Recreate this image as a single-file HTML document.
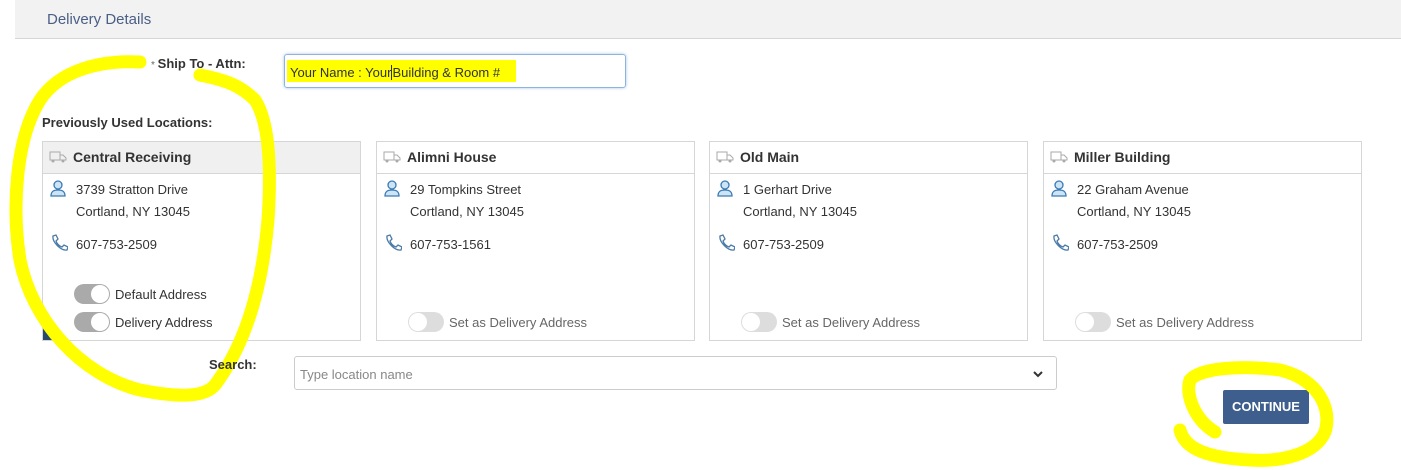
<!DOCTYPE html>
<html><head><style>
body{margin:0;width:1401px;height:470px;background:#fff;font-family:"Liberation Sans",sans-serif;position:relative;overflow:hidden;color:#333}
.abs{position:absolute}
.hdr{left:15px;top:0;width:1386px;height:38px;background:#f2f2f2;border-bottom:1px solid #d6d6d6}
.hdr span{position:absolute;left:32px;top:11px;font-size:15px;color:#4a5f85}
.card{position:absolute;top:141px;width:317px;height:198px;border:1px solid #d6d6d6;background:#fff}
.card .h{height:31px;border-bottom:1px solid #d6d6d6;font-weight:bold;font-size:14px;line-height:31px;padding-left:30px;position:relative}
.card .h svg{position:absolute;left:6px;top:8px}
.l{position:absolute;font-size:13px;color:#333}
.tog{position:absolute;width:36px;height:20px;border-radius:10px}
.tog i{position:absolute;top:1px;width:18px;height:18px;border-radius:9px;background:#fff}
.lab{position:absolute;font-size:13px}
</style></head><body>
<div class="abs hdr"><span>Delivery Details</span></div>
<div class="abs" style="left:151px;top:56px;font-size:13px;font-weight:bold"><span style="font-weight:normal;font-size:10px;color:#666">* </span>Ship To - Attn:</div>
<div class="abs" style="left:284px;top:54px;width:340px;height:32px;border:1px solid #8fb3dd;border-radius:3px;box-shadow:0 0 3px #aac6ea"></div>
<div class="abs" style="left:287px;top:60px;width:229px;height:22px;background:#ffff00"></div>
<div class="abs" style="left:290px;top:65px;font-size:13px;color:#333">Your Name : Your<span style="border-left:1px solid #333"></span>Building &amp; Room #</div>
<div class="abs" style="left:42px;top:115px;font-size:13px;font-weight:bold">Previously Used Locations:</div>

<div class="card" style="left:42px">
 <div class="h" style="background:#f0f0f0"><svg width="18" height="14"><rect x="1" y="2" width="10" height="8" fill="none" stroke="#aaa"/><path d="M11 5h3l3 3v2h-6z" fill="none" stroke="#aaa"/><circle cx="4" cy="11" r="1.5" fill="#aaa"/><circle cx="14" cy="11" r="1.5" fill="#aaa"/></svg>Central Receiving</div>
 <svg class="abs" style="left:6px;top:37px" width="18" height="18"><circle cx="9" cy="6" r="4" fill="#cde4f5" stroke="#3a7ab5" stroke-width="1.3"/><path d="M2 17c0-5 3-6 7-6s7 1 7 6z" fill="#cde4f5" stroke="#3a7ab5" stroke-width="1.3"/></svg>
 <div class="l" style="left:33px;top:40px">3739 Stratton Drive</div>
 <div class="l" style="left:33px;top:62px">Cortland, NY 13045</div>
 <svg class="abs" style="left:7px;top:92px" width="18" height="18"><path d="M3 2l3 -1 2 4-2 2c1 3 3 5 6 6l2-2 4 2-1 3c-6 1-15-8-14-14z" fill="none" stroke="#4a7aa8" stroke-width="1.3"/></svg>
 <div class="l" style="left:33px;top:95px">607-753-2509</div>
 <div class="tog" style="left:31px;top:142px;background:#aaa"><i style="left:17px"></i></div>
 <div class="lab" style="left:72px;top:145px">Default Address</div>
 <div class="tog" style="left:31px;top:170px;background:#aaa"><i style="left:17px"></i></div>
 <div class="lab" style="left:72px;top:173px">Delivery Address</div>
 <svg class="abs" style="left:0;top:172px" width="28" height="26"><path d="M0 0L26 26H0z" fill="#2a4a6a"/><path d="M3 17l3 3 6-7" stroke="#ff0" stroke-width="2" fill="none"/></svg>
</div>

<div class="card" style="left:376px">
 <div class="h"><svg width="18" height="14"><rect x="1" y="2" width="10" height="8" fill="none" stroke="#aaa"/><path d="M11 5h3l3 3v2h-6z" fill="none" stroke="#aaa"/><circle cx="4" cy="11" r="1.5" fill="#aaa"/><circle cx="14" cy="11" r="1.5" fill="#aaa"/></svg>Alimni House</div>
 <svg class="abs" style="left:6px;top:37px" width="18" height="18"><circle cx="9" cy="6" r="4" fill="#cde4f5" stroke="#3a7ab5" stroke-width="1.3"/><path d="M2 17c0-5 3-6 7-6s7 1 7 6z" fill="#cde4f5" stroke="#3a7ab5" stroke-width="1.3"/></svg>
 <div class="l" style="left:33px;top:40px">29 Tompkins Street</div>
 <div class="l" style="left:33px;top:62px">Cortland, NY 13045</div>
 <svg class="abs" style="left:7px;top:92px" width="18" height="18"><path d="M3 2l3 -1 2 4-2 2c1 3 3 5 6 6l2-2 4 2-1 3c-6 1-15-8-14-14z" fill="none" stroke="#4a7aa8" stroke-width="1.3"/></svg>
 <div class="l" style="left:33px;top:95px">607-753-1561</div>
 <div class="tog" style="left:31px;top:170px;background:#ddd"><i style="left:1px"></i></div>
 <div class="lab" style="left:72px;top:173px;color:#666">Set as Delivery Address</div>
</div>

<div class="card" style="left:709px">
 <div class="h"><svg width="18" height="14"><rect x="1" y="2" width="10" height="8" fill="none" stroke="#aaa"/><path d="M11 5h3l3 3v2h-6z" fill="none" stroke="#aaa"/><circle cx="4" cy="11" r="1.5" fill="#aaa"/><circle cx="14" cy="11" r="1.5" fill="#aaa"/></svg>Old Main</div>
 <svg class="abs" style="left:6px;top:37px" width="18" height="18"><circle cx="9" cy="6" r="4" fill="#cde4f5" stroke="#3a7ab5" stroke-width="1.3"/><path d="M2 17c0-5 3-6 7-6s7 1 7 6z" fill="#cde4f5" stroke="#3a7ab5" stroke-width="1.3"/></svg>
 <div class="l" style="left:33px;top:40px">1 Gerhart Drive</div>
 <div class="l" style="left:33px;top:62px">Cortland, NY 13045</div>
 <svg class="abs" style="left:7px;top:92px" width="18" height="18"><path d="M3 2l3 -1 2 4-2 2c1 3 3 5 6 6l2-2 4 2-1 3c-6 1-15-8-14-14z" fill="none" stroke="#4a7aa8" stroke-width="1.3"/></svg>
 <div class="l" style="left:33px;top:95px">607-753-2509</div>
 <div class="tog" style="left:31px;top:170px;background:#ddd"><i style="left:1px"></i></div>
 <div class="lab" style="left:72px;top:173px;color:#666">Set as Delivery Address</div>
</div>

<div class="card" style="left:1043px">
 <div class="h"><svg width="18" height="14"><rect x="1" y="2" width="10" height="8" fill="none" stroke="#aaa"/><path d="M11 5h3l3 3v2h-6z" fill="none" stroke="#aaa"/><circle cx="4" cy="11" r="1.5" fill="#aaa"/><circle cx="14" cy="11" r="1.5" fill="#aaa"/></svg>Miller Building</div>
 <svg class="abs" style="left:6px;top:37px" width="18" height="18"><circle cx="9" cy="6" r="4" fill="#cde4f5" stroke="#3a7ab5" stroke-width="1.3"/><path d="M2 17c0-5 3-6 7-6s7 1 7 6z" fill="#cde4f5" stroke="#3a7ab5" stroke-width="1.3"/></svg>
 <div class="l" style="left:33px;top:40px">22 Graham Avenue</div>
 <div class="l" style="left:33px;top:62px">Cortland, NY 13045</div>
 <svg class="abs" style="left:7px;top:92px" width="18" height="18"><path d="M3 2l3 -1 2 4-2 2c1 3 3 5 6 6l2-2 4 2-1 3c-6 1-15-8-14-14z" fill="none" stroke="#4a7aa8" stroke-width="1.3"/></svg>
 <div class="l" style="left:33px;top:95px">607-753-2509</div>
 <div class="tog" style="left:31px;top:170px;background:#ddd"><i style="left:1px"></i></div>
 <div class="lab" style="left:72px;top:173px;color:#666">Set as Delivery Address</div>
</div>

<div class="abs" style="left:294px;top:356px;width:761px;height:32px;border:1px solid #ccc;border-radius:3px"></div>
<div class="abs" style="left:300px;top:367px;font-size:13px;color:#888">Type location name</div>
<svg class="abs" style="left:1032px;top:369px" width="12" height="10"><path d="M2 3l4 4 4-4" stroke="#333" stroke-width="2" fill="none"/></svg>

<div class="abs" style="left:1223px;top:390px;width:86px;height:34px;background:#3e5f8e;border-radius:2px;color:#fff;font-weight:bold;font-size:13px;line-height:34px;text-align:center">CONTINUE</div>

<svg class="abs" style="left:0;top:0" width="1401" height="470">
<g fill="none" stroke="#ffff00" stroke-width="13" stroke-linecap="round">
<path d="M140 62C100 60 60 70 40 100C15 140 12 210 20 260C32 320 80 375 140 390C180 398 205 397 215 385C245 345 262 290 268 220C272 160 268 120 255 100C240 85 225 80 200 75"/>
<path d="M1215 432C1195 420 1185 395 1190 380C1200 368 1240 365 1280 370C1320 380 1332 410 1325 432C1315 455 1280 462 1250 460C1210 458 1185 450 1180 430"/>
</g>
</svg>
<div class="abs" style="left:209px;top:357px;font-size:13px;font-weight:bold">Search:</div>
</body></html>
